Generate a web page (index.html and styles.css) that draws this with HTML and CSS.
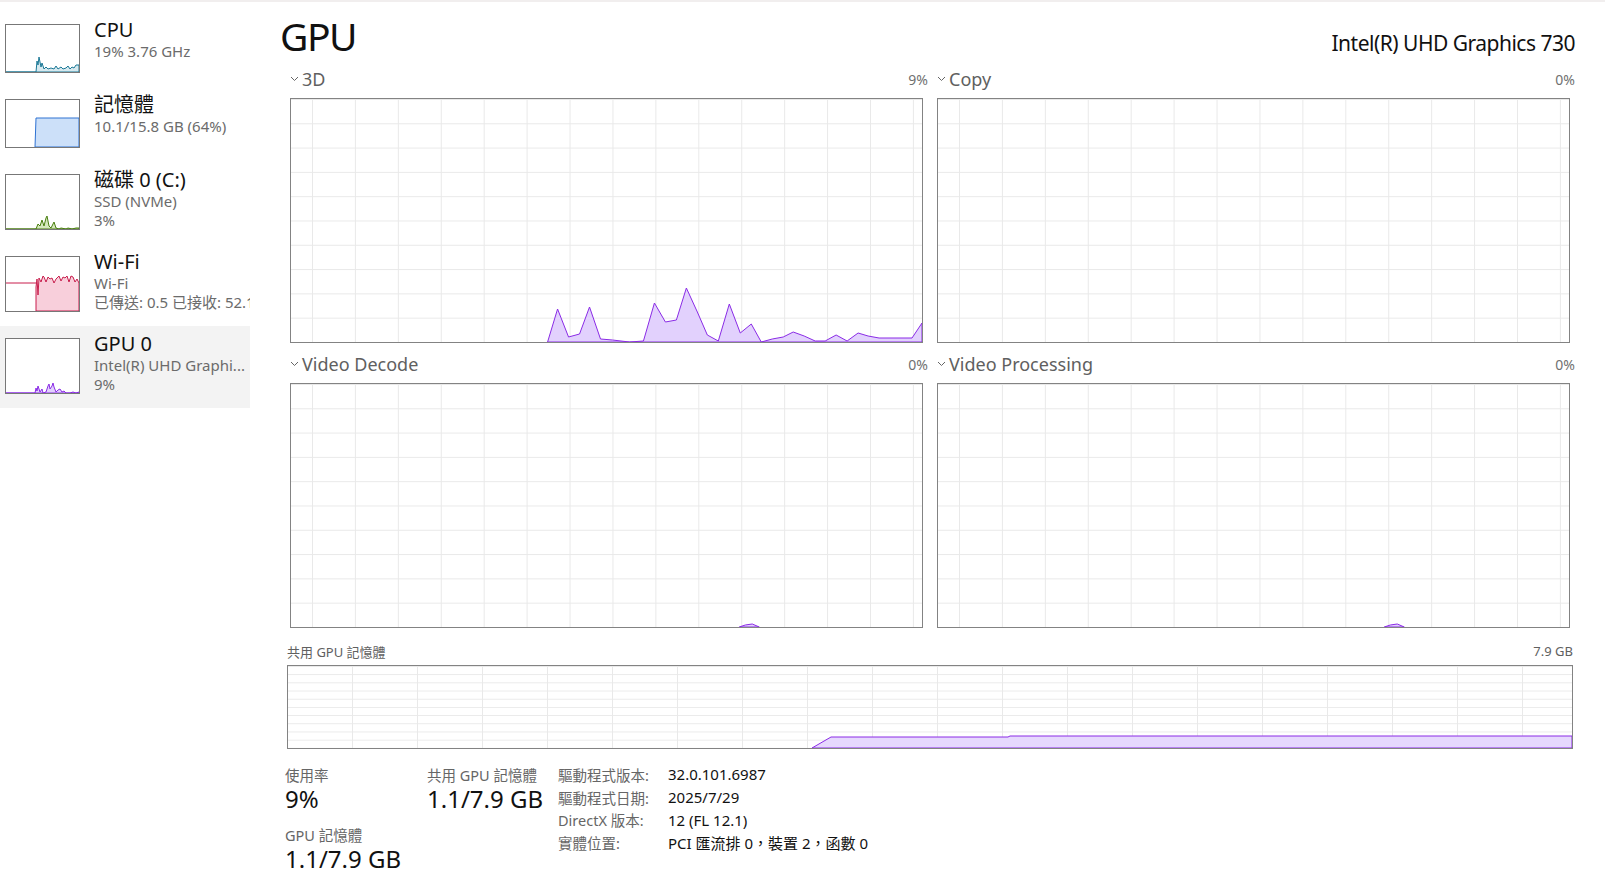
FILE: index.html
```html
<!DOCTYPE html>
<html>
<head>
    <title>工作管理員 - GPU</title>
    <link rel="stylesheet" href="styles.css">
</head>
<body>
<div class="window">
    <aside class="sidebar">
        <div class="perf-item">
            <div class="thumb">
                <svg viewBox="0 0 73 47" preserveAspectRatio="none">
                    <polygon class="cpu" points="0,47 30,47 31,36 32,40 33,32 35,42 36,38 38,44 40,42 42,44 45,43 48,44 50,41 52,44 55,42 57,44 60,43 62,41 64,44 66,42 68,43 70,40 73,40 73,47"/>
                </svg>
            </div>
            <div class="info">
                <div class="name">CPU</div>
                <div class="sub">19% 3.76 GHz</div>
            </div>
        </div>
        <div class="perf-item">
            <div class="thumb">
                <svg viewBox="0 0 73 47" preserveAspectRatio="none">
                    <polygon class="mem" points="29,47 30,18 73,18 73,47"/>
                </svg>
            </div>
            <div class="info">
                <div class="name">記憶體</div>
                <div class="sub">10.1/15.8 GB (64%)</div>
            </div>
        </div>
        <div class="perf-item">
            <div class="thumb">
                <svg viewBox="0 0 73 54" preserveAspectRatio="none">
                    <polygon class="disk" points="0,54 30,54 32,49 34,51 36,45 38,51 40,43 41,41 43,51 45,53 48,47 50,53 53,54 55,53 60,54 62,53 66,54 70,53 73,53 73,54"/>
                </svg>
            </div>
            <div class="info">
                <div class="name">磁碟 0 (C:)</div>
                <div class="sub">SSD (NVMe)</div>
                <div class="sub">3%</div>
            </div>
        </div>
        <div class="perf-item">
            <div class="thumb">
                <svg viewBox="0 0 73 54" preserveAspectRatio="none">
                    <polygon class="wifi" points="30,54 30,30 31,22 32,38 33,21 35,25 37,19 38,20 40,25 42,20 44,22 46,21 48,26 50,22 53,19 55,24 57,20 59,21 61,19 63,25 65,19 67,20 69,25 71,22 73,26 73,54"/>
                    <line class="wifi-line" x1="0" y1="26" x2="30" y2="26"/>
                </svg>
            </div>
            <div class="info">
                <div class="name">Wi-Fi</div>
                <div class="sub">Wi-Fi</div>
                <div class="sub">已傳送: 0.5 已接收: 52.1 Kbps</div>
            </div>
        </div>
        <div class="perf-item selected">
            <div class="thumb">
                <svg viewBox="0 0 73 54" preserveAspectRatio="none">
                    <polygon class="gpu" points="0,54 29,54 30,49 31,52 32,47 34,53 36,50 37,54 40,53 42,47 43,45 44,50 46,47 47,44 48,48 50,53 52,51 54,50 56,53 58,52 60,54 64,54 67,53 70,54 73,53 73,54"/>
                </svg>
            </div>
            <div class="info">
                <div class="name">GPU 0</div>
                <div class="sub">Intel(R) UHD Graphi...</div>
                <div class="sub">9%</div>
            </div>
        </div>
    </aside>

    <main class="detail">
        <header class="detail-head">
            <h1>GPU</h1>
            <div class="adapter">Intel(R) UHD Graphics 730</div>
        </header>

        <section class="engines">
            <div class="engine">
                <div class="engine-head">
                    <span class="engine-name"><svg class="chevron" viewBox="0 0 9 6"><path d="M1 1 L4.5 4.5 L8 1"/></svg>3D</span>
                    <span class="engine-pct">9%</span>
                </div>
                <div class="chart">
                    <svg viewBox="0 0 632 243" preserveAspectRatio="none">
                        <polygon class="gpu" points="257,243 267,210 278,238 289,235 299,208 310,240 322,241 339,243 353,242 364,204 375,223 386,221 396,189 407,213 417,236 428,242 439,205 450,234 461,225 471,243 482,240 493,238 503,233 514,237 525,242 535,242 546,236 557,242 568,234 578,237 589,239 622,239 632,224 632,243"/>
                    </svg>
                </div>
            </div>
            <div class="engine">
                <div class="engine-head">
                    <span class="engine-name"><svg class="chevron" viewBox="0 0 9 6"><path d="M1 1 L4.5 4.5 L8 1"/></svg>Copy</span>
                    <span class="engine-pct">0%</span>
                </div>
                <div class="chart"></div>
            </div>
            <div class="engine">
                <div class="engine-head">
                    <span class="engine-name"><svg class="chevron" viewBox="0 0 9 6"><path d="M1 1 L4.5 4.5 L8 1"/></svg>Video Decode</span>
                    <span class="engine-pct">0%</span>
                </div>
                <div class="chart">
                    <svg viewBox="0 0 632 243" preserveAspectRatio="none">
                        <polygon class="gpu" points="449,243 455,241 462,240 469,243"/>
                    </svg>
                </div>
            </div>
            <div class="engine">
                <div class="engine-head">
                    <span class="engine-name"><svg class="chevron" viewBox="0 0 9 6"><path d="M1 1 L4.5 4.5 L8 1"/></svg>Video Processing</span>
                    <span class="engine-pct">0%</span>
                </div>
                <div class="chart">
                    <svg viewBox="0 0 632 243" preserveAspectRatio="none">
                        <polygon class="gpu" points="447,243 453,241 460,240 467,243"/>
                    </svg>
                </div>
            </div>
        </section>

        <section class="shared">
            <div class="shared-head">
                <span>共用 GPU 記憶體</span>
                <span>7.9 GB</span>
            </div>
            <div class="chart chart-mem">
                <svg viewBox="0 0 1284 82" preserveAspectRatio="none">
                    <polygon class="gpu mem-fill" points="524,82 543,71 720,71 722,70 1284,70 1284,82"/>
                </svg>
            </div>
        </section>

        <section class="stats">
            <div class="stat-col col-usage">
                <div class="stat-label">使用率</div>
                <div class="stat-value">9%</div>
                <div class="stat-label gap">GPU 記憶體</div>
                <div class="stat-value">1.1/7.9 GB</div>
            </div>
            <div class="stat-col col-shared">
                <div class="stat-label">共用 GPU 記憶體</div>
                <div class="stat-value">1.1/7.9 GB</div>
            </div>
            <div class="props">
                <span class="prop-label">驅動程式版本:</span><span class="prop-value">32.0.101.6987</span>
                <span class="prop-label">驅動程式日期:</span><span class="prop-value">2025/7/29</span>
                <span class="prop-label">DirectX 版本:</span><span class="prop-value">12 (FL 12.1)</span>
                <span class="prop-label">實體位置:</span><span class="prop-value">PCI 匯流排 0，裝置 2，函數 0</span>
            </div>
        </section>
    </main>
</div>
</body>
</html>
```

FILE: styles.css
```css
* { box-sizing: border-box; }
html, body { margin: 0; padding: 0; background: #fff; }
body { font-family: "Noto Sans", "Noto Sans CJK TC", sans-serif; color: #1a1a1a; }

.window { display: flex; height: 890px; border-top: 2px solid #f1eeee; overflow: hidden; }

/* left list */
.sidebar { width: 250px; flex-shrink: 0; padding-top: 10px; overflow: hidden; }
.perf-item { display: flex; padding: 12px 0 14px 5px; }
.perf-item.selected { background: #f3f3f3; }
.thumb { width: 75px; min-height: 49px; flex-shrink: 0; border: 1px solid #777; background: #fff; }
.thumb svg { display: block; width: 100%; height: 100%; }
.info { margin: -6px 0 0 14px; min-width: 0; white-space: nowrap; }
.name { font-size: 20px; line-height: 24px; color: #111; }
.sub { font-size: 15px; line-height: 19px; color: #6b6b6b; }

svg polygon { stroke-width: 1; vector-effect: non-scaling-stroke; stroke-linejoin: round; }
.cpu { fill: #d6e9ef; stroke: #1b7896; }
.mem { fill: #cce0f9; stroke: #2f72d2; }
.disk { fill: #d5e8bd; stroke: #4a7f10; }
.wifi { fill: #f8cfdb; stroke: #c81d4c; }
.wifi-line { stroke: #c81d4c; stroke-width: 1; vector-effect: non-scaling-stroke; }
.gpu { fill: #e2d1fd; stroke: #8a2be6; }
.mem-fill { fill: #e6d8fd; }

/* right detail */
.detail { flex: 1; padding: 10px 30px 0 30px; min-width: 0; }
.detail-head { display: flex; justify-content: space-between; align-items: baseline; height: 48px; margin-bottom: 6px; }
.detail-head h1 { margin: 0; font-size: 39px; line-height: 48px; font-weight: 400; letter-spacing: -1.5px; color: #111; }
.adapter { font-size: 21px; letter-spacing: -0.5px; color: #111; }

.engines { display: grid; grid-template-columns: 1fr 1fr; column-gap: 14px; row-gap: 8px; margin: 0 5px 0 10px; }
.engine-head { display: flex; justify-content: space-between; align-items: center; height: 26px; margin-bottom: 6px; }
.engine-name { display: flex; align-items: center; font-size: 18px; color: #606060; }
.chevron { width: 9px; height: 6px; margin-right: 3px; fill: none; stroke: #666; stroke-width: 1; }
.engine-pct { font-size: 14px; color: #707070; margin-right: -5px; }

.chart {
    height: 245px;
    border: 1px solid #838383;
    background-image:
        linear-gradient(to right, #e9e9e9 1px, transparent 1px),
        linear-gradient(to bottom, #e9e9e9 1px, transparent 1px);
    background-size: 42.93px 100%, 100% 24.3px;
    background-position: 21px 0, 0 0;
}
.chart svg { display: block; width: 100%; height: 100%; }

.shared { margin: 15px 2px 0 7px; }
.shared-head { display: flex; justify-content: space-between; align-items: center; height: 16px; margin-bottom: 6px; font-size: 13px; color: #606060; }
.chart-mem {
    height: 84px;
    background-size: 65px 100%, 100% 8.2px;
    background-position: 64px 0, 0 0;
}

.stats { display: flex; margin: 16px 0 0 5px; }
.stat-col { display: flex; flex-direction: column; }
.col-usage { width: 142px; }
.col-shared { width: 131px; }
.stat-label { font-size: 14.5px; line-height: 20px; color: #666; }
.stat-label.gap { margin-top: 12px; }
.stat-value { font-size: 24px; line-height: 28px; color: #111; }

.props { display: grid; grid-template-columns: 110px auto; grid-auto-rows: 22.7px; align-items: center; margin-top: -2px; font-size: 14.5px; }
.prop-label { color: #666; }
.prop-value { color: #111; font-size: 15px; }
```
